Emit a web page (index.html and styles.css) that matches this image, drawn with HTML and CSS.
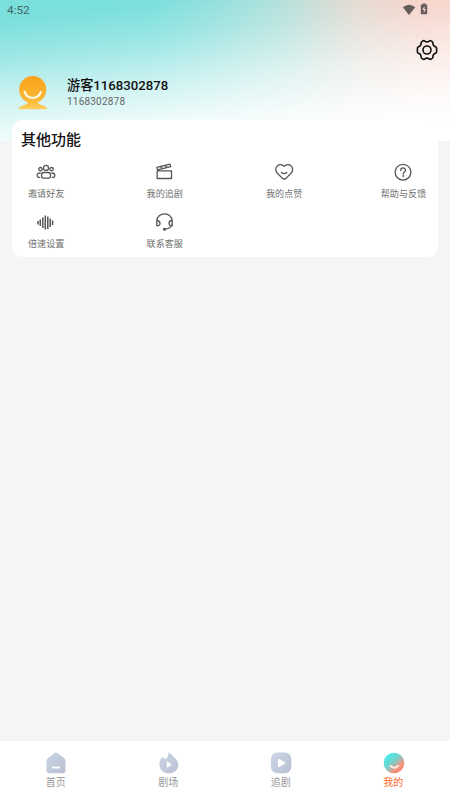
FILE: index.html
```html
<!DOCTYPE html>
<html lang="zh-CN">
<head>
<meta charset="utf-8">
<title>我的</title>
<link rel="stylesheet" href="styles.css">
</head>
<body>
<div class="app">
  <header class="hero">
    <div class="status">
      <span class="time">4:52</span>
      <svg class="wifi" width="14" height="12" viewBox="0 0 14 12"><path d="M.8 3.2Q7-1.8 13.2 3.2L7 11z" fill="#655d5a"/></svg>
      <svg class="battery" width="8" height="12" viewBox="0 0 8 12"><path d="M2.500.5h3v1h1q.7 0 .7.7v8.200q0 .8-.8.8H1.600q-.8 0-.8-.8V2.200q0-.7.7-.7h1z" fill="#655d5a"/><path d="M4.500 3L2.300 6.800h1.500V10L5.900 6H4.500z" fill="#f0d8d0"/></svg>
    </div>
    <div class="toolbar">
      <svg width="22" height="22" viewBox="0 0 22 22" fill="none" stroke="#111" stroke-width="1.600" stroke-linejoin="round"><path d="M7.300 1.700Q8.100 1.400 8.800 2.100Q11 3.700 13.200 2.100Q13.900 1.400 14.700 1.700L16.400 2.800Q17 3.300 16.900 4.200Q17 7 19.500 7.700Q20.400 8 20.600 9V13Q20.400 14 19.500 14.300Q17 15 16.900 17.800Q17 18.700 16.400 19.200L14.700 20.300Q13.900 20.600 13.200 19.900Q11 18.300 8.800 19.900Q8.100 20.600 7.300 20.300L5.600 19.200Q5 18.700 5.100 17.800Q5 15 2.500 14.300Q1.600 14 1.400 13V9Q1.600 8 2.500 7.700Q5 7 5.100 4.200Q5 3.300 5.600 2.800Z"/><circle cx="11" cy="11" r="4"/></svg>
    </div>
    <div class="profile">
      <svg class="avatar" width="30" height="35" viewBox="0 0 30 35">
        <defs><linearGradient id="sun" x2="0" y2="1"><stop offset="0" stop-color="#f9a21c"/><stop offset="1" stop-color="#fbbc3a"/></linearGradient><linearGradient id="base" x2="0" y2="1"><stop offset="0" stop-color="#fbb936"/><stop offset="1" stop-color="#fdd060"/></linearGradient></defs>
        <path d="M10.500 26H19Q20 28.300 26 30Q30 31.500 29 33.200H1Q-.5 31.500 4 30Q9.500 28.300 10.500 26z" fill="url(#base)"/>
        <circle cx="14.700" cy="13.700" r="13.600" fill="url(#sun)"/>
        <path d="M6.700 16C9 23.800 20.400 23.800 22.700 16" fill="none" stroke="#fff7e5" stroke-width="2.300" stroke-linecap="round"/>
      </svg>
      <div class="identity">
        <div class="name">游客1168302878</div>
        <div class="uid">1168302878</div>
      </div>
    </div>
  </header>

  <main class="card">
    <h2>其他功能</h2>
    <div class="grid">
      <div class="item">
        <svg viewBox="0 0 20 20"><circle cx="10" cy="5.900" r="2.500"/><circle cx="4.500" cy="7.200" r="1.700"/><circle cx="15.500" cy="7.200" r="1.700"/><rect x="5.500" y="10.500" width="9" height="5.700" rx="2.500"/><path d="M4.200 11Q1.200 11 1.200 13.300T3.700 15.400M15.800 11Q18.800 11 18.800 13.300T16.300 15.400"/></svg>
        <span>邀请好友</span>
      </div>
      <div class="item">
        <svg viewBox="0 0 20 20"><path d="M2.200 8.800H16.500V16.500H2.200zM1.800 5.300L15 2.100L15.700 4.600L2.500 7.800zM5.600 4.500L7.300 6.500M10.100 3.300L11.800 5.400"/></svg>
        <span>我的追剧</span>
      </div>
      <div class="item">
        <svg viewBox="0 0 20 20"><path d="M10.200 4.400C7.800 1.500 4 2.200 2.400 5C1.300 7.200 1.800 9.400 3.400 11.200L8.700 16.600Q10.200 17.900 11.700 16.600L17 11.200C18.600 9.400 19.100 7.200 18 5C16.400 2.200 12.600 1.500 10.200 4.400zM7.600 10.500Q10.200 12.700 12.800 10.500"/></svg>
        <span>我的点赞</span>
      </div>
      <div class="item">
        <svg viewBox="0 0 20 20"><circle cx="10" cy="10.200" r="7.900"/><path d="M7.700 8.400C7.700 5 12.500 5.200 12.500 8.100C12.500 10 10.200 9.900 10.200 12M10.200 13.300V14.500"/></svg>
        <span>帮助与反馈</span>
      </div>
      <div class="item">
        <svg viewBox="0 0 20 20"><path class="bars" d="M2 9V12.500M4.300 7.500V14M6.800 5.600V16M9.300 3.500V17.500M11.800 4.600V17M14.200 6.500V15M16.600 8.500V13"/></svg>
        <span>倍速设置</span>
      </div>
      <div class="item">
        <svg viewBox="0 0 20 20"><path d="M1.800 9C1.800-.5 17.200-.5 17.200 9V11.500Q16.500 16.500 10.300 17.200M1.800 8.500Q5 8.500 5 11.200T1.800 13.700zM17.200 8.500Q14 8.500 14 11.200T17.200 13.700z"/><circle cx="9.500" cy="17.200" r=".9" fill="#555"/></svg>
        <span>联系客服</span>
      </div>
    </div>
  </main>

  <nav class="tabs">
    <svg class="defs" width="0" height="0"><defs><linearGradient id="mute" x2="1" y2="1"><stop offset="0" stop-color="#cbd6e8"/><stop offset="1" stop-color="#b9c0d0"/></linearGradient><linearGradient id="active" x1=".15" y1=".1" x2=".9" y2=".9"><stop offset="0" stop-color="#3fefeb"/><stop offset=".42" stop-color="#76cfc9"/><stop offset=".75" stop-color="#f1957f"/><stop offset="1" stop-color="#ff8069"/></linearGradient></defs></svg>
    <div class="tab">
      <svg width="22" height="22" viewBox="0 0 22 22"><path d="M9.300 1.200Q11 0 12.700 1.200L19 6.100Q20.500 7.300 20.500 9V18.500Q20.500 21.300 17.700 21.300H4.300Q1.500 21.300 1.500 18.500V9Q1.500 7.300 3 6.100z" fill="url(#mute)"/><path d="M7.800 15.500H14.200" stroke="#fff" stroke-width="1.800" stroke-linecap="round"/></svg>
      <span>首页</span>
    </div>
    <div class="tab">
      <svg width="22" height="22" viewBox="0 0 22 22"><path d="M10.500.5Q14 1.700 15.500 5C18 6.500 20.300 9.500 20.300 12.500C20.300 18 16 21.500 10.900 21.500S1.400 17.700 1.400 12.500Q1.400 8.500 3.200 6Q4.500 4.500 6 6.200L8.500 7Q10.500 4.500 10.500.5z" fill="url(#mute)"/><path d="M8.700 9.800Q8.700 9 9.500 9.500L13.200 12Q14 12.600 13.200 13.200L9.500 15.600Q8.700 16 8.700 15.100z" fill="#fff"/></svg>
      <span>剧场</span>
    </div>
    <div class="tab">
      <svg width="22" height="22" viewBox="0 0 22 22"><rect x=".9" y=".4" width="20.500" height="20.800" rx="6.500" fill="url(#mute)"/><path d="M8 7.600Q8 6.200 9.200 6.900L15 10.200Q15.900 10.900 15 11.600L9.200 14.900Q8 15.500 8 14.200z" fill="#fff"/></svg>
      <span>追剧</span>
    </div>
    <div class="tab active">
      <svg width="22" height="22" viewBox="0 0 22 22"><circle cx="11" cy="11" r="10.300" fill="url(#active)"/><path d="M7.400 13.800Q11.400 17.600 15.300 13.800" fill="none" stroke="#ffe9df" stroke-width="1.900" stroke-linecap="round"/></svg>
      <span>我的</span>
    </div>
  </nav>
</div>
</body>
</html>
```
FILE: styles.css
```css
* { box-sizing: border-box; }
body {
  margin: 0;
  font-family: Roboto, "Noto Sans CJK SC", sans-serif;
  background: #f5f5f5;
}
svg { display: block; flex: none; }
.app {
  display: flex;
  flex-direction: column;
  height: 800px;
}
.hero {
  height: 141px;
  flex: none;
  background:
    linear-gradient(354deg, #fff 10%, rgba(255,255,255,.9) 25%, rgba(255,255,255,.64) 46%, rgba(255,255,255,.22) 72%, rgba(255,255,255,0) 90%),
    linear-gradient(75deg, #7bdfdc 0%, #7bdfdc 38%, #8cdfdc 49%, #a8dfda 63%, #dfd6cd 80%, #f4cdc2 93%);
}
.status {
  display: flex;
  height: 20px;
  padding: 3px 22.5px 0 7px;
}
.time {
  flex: 1;
  font-size: 11.8px;
  line-height: 15px;
  color: #3f6665;
}
.battery { margin-left: 4px; }
.wifi { margin-top: 1px; }
.toolbar {
  display: flex;
  justify-content: flex-end;
  padding: 19px 12.5px 0 0;
}
.profile {
  display: flex;
  padding: 15px 0 0 18px;
}
.identity { margin-left: 19px; padding-top: 1px; }
.name {
  font-size: 13.2px;
  font-weight: 500;
  line-height: 18px;
  color: #111;
}
.uid {
  font-size: 10px;
  letter-spacing: .2px;
  line-height: 13px;
  color: #666;
}
.card {
  height: 137px;
  margin: -21px 12.5px 0 12.4px;
  padding: 9px 10px 0 9px;
  flex: none;
  border-radius: 10px;
  background: #fff;
}
h2 {
  margin: 0 0 0 -.5px;
  font-size: 15px;
  font-weight: 500;
  line-height: 22px;
  color: #111;
}
.grid {
  display: grid;
  grid-template-columns: repeat(4, 48px);
  grid-auto-rows: 50px;
  justify-content: space-between;
  padding-top: 11px;
}
.item {
  display: flex;
  flex-direction: column;
  align-items: center;
  font-size: 9.1px;
  line-height: 14px;
  color: #707070;
  white-space: nowrap;
}
.item svg {
  width: 20px;
  height: 20px;
  fill: none;
  stroke: #555;
  stroke-width: 1.3;
  stroke-linejoin: round;
  stroke-linecap: round;
}
.item svg .bars { stroke-width: 1.5; stroke-linecap: butt; }
.item span { margin-top: 5px; }
.item:nth-child(4n + 1) { padding-left: 1.5px; }
.tabs {
  display: grid;
  grid-template-columns: repeat(4, 1fr);
  height: 59px;
  margin-top: auto;
  background: #fff;
}
.defs { position: absolute; }
.tab {
  display: flex;
  flex-direction: column;
  align-items: center;
  padding-top: 11px;
  font-size: 10px;
  line-height: 15px;
  color: #999;
}
.tab span { margin: 1px 1px 0 0; }
.tab.active { color: #ff6a2b; }
```
